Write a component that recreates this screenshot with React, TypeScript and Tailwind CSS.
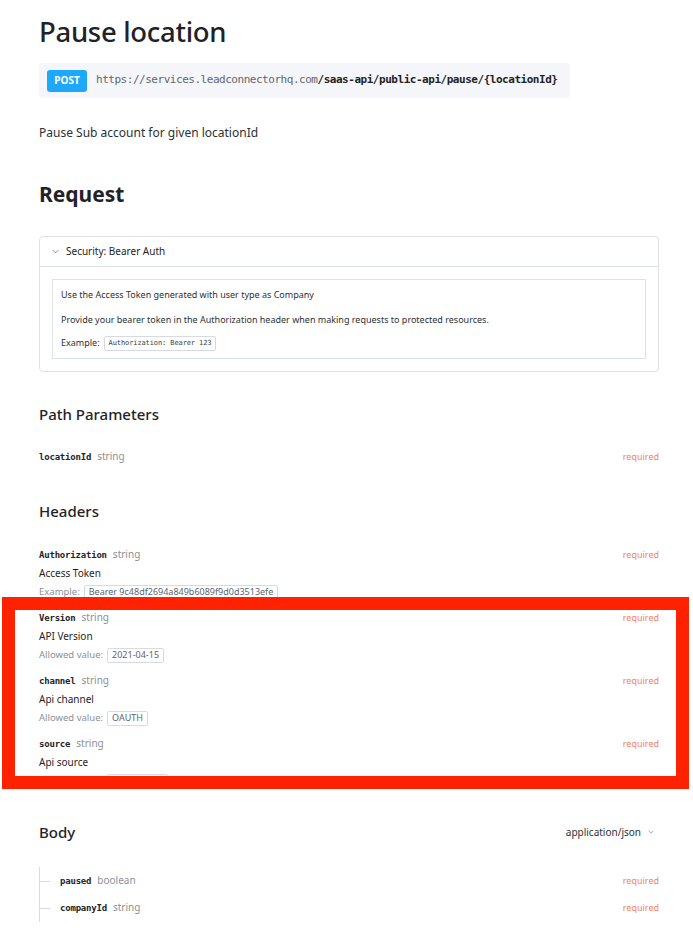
import React from 'react';

const sans = "font-['Noto_Sans',sans-serif]";
const mono = "font-['DejaVu_Sans_Mono',monospace]";

type Field = {
  name: string;
  type: string;
  desc?: string;
  label?: string;
  value?: string;
};

const HEADERS: Field[] = [
  { name: 'Authorization', type: 'string', desc: 'Access Token', label: 'Example:', value: 'Bearer 9c48df2694a849b6089f9d0d3513efe' },
  { name: 'Version', type: 'string', desc: 'API Version', label: 'Allowed value:', value: '2021-04-15' },
  { name: 'channel', type: 'string', desc: 'Api channel', label: 'Allowed value:', value: 'OAUTH' },
  { name: 'source', type: 'string', desc: 'Api source', label: 'Allowed value:', value: 'WEBSITE_UI' },
];

const FieldName: React.FC<{ name: string; type: string }> = ({ name, type }) => (
  <div className="flex items-baseline gap-[6px]">
    <span className={`${mono} text-[9px] font-bold tracking-[-0.2px] text-[#1f2328]`}>{name}</span>
    <span className="text-[10px] text-[#8b9099]">{type}</span>
  </div>
);

const Required = () => <span className="text-[9px] text-[#f2845f]">required</span>;

const HeaderRow: React.FC<{ f: Field }> = ({ f }) => (
  <div className="flex flex-col">
    <div className="flex items-center justify-between h-[16px]">
      <FieldName name={f.name} type={f.type} />
      <Required />
    </div>
    <div className="mt-[2px] text-[10px] text-[#1f2328] h-[16px] flex items-center">{f.desc}</div>
    <div className="mt-[3px] flex items-center gap-[4px] h-[16px]">
      <span className="text-[9.5px] text-[#8b9099]">{f.label}</span>
      <span className="border border-[#d6dbe3] rounded-[2px] px-[4px] h-[15px] flex items-center text-[9px] text-[#5c6470]">{f.value}</span>
    </div>
  </div>
);

export default function App() {
  return (
    <div className={`${sans} relative bg-white w-[693px] h-[932px] overflow-hidden text-[#1f2328]`}>
      <div className="ml-[39px] pt-[12px] w-[620px]">
        <h1 className="text-[27.5px] font-medium leading-[40px] tracking-[-0.3px]">Pause location</h1>

        <div className="mt-[11px] w-[531px] h-[35px] bg-[#f5f6f9] rounded-[4px] flex items-center pl-[8px] gap-[9px]">
          <span className="bg-[#1ea8fc] text-white text-[10px] font-bold rounded-[3px] w-[40px] h-[22px] flex items-center justify-center">POST</span>
          <span className={`${mono} text-[11px] tracking-[-0.47px]`}>
            <span className="text-[#5f6670]">https://services.leadconnectorhq.com</span>
            <span className="text-[#1f2328] font-bold">/saas-api/public-api/pause/{'{locationId}'}</span>
          </span>
        </div>

        <p className="mt-[26px] text-[12px] leading-[18px] text-[#2b3036]">Pause Sub account for given locationId</p>

        <h2 className="mt-[38px] text-[21px] font-bold leading-[28px]">Request</h2>

        <div className="mt-[28px] border border-[#dde1e8] rounded-[4px] w-[620px]">
          <div className="h-[30px] flex items-center px-[11px] gap-[6px] border-b border-[#dde1e8]">
            <svg width="9" height="9" viewBox="0 0 10 10" fill="none" stroke="#7a818b" strokeWidth="1">
              <path d="M2 3.5 L5 6.5 L8 3.5" />
            </svg>
            <span className="text-[10px]">Security: Bearer Auth</span>
          </div>
          <div className="p-[12px]">
            <div className="border border-[#dde1e8] px-[8px] pt-[8px] pb-[7px] flex flex-col gap-[8px] text-[9px] text-[#2b3036]">
              <div className="h-[14px] flex items-center">Use the Access Token generated with user type as Company</div>
              <div className="h-[14px] flex items-center mt-[3px]">Provide your bearer token in the Authorization header when making requests to protected resources.</div>
              <div className="flex items-center gap-[4px] h-[16px]">
                <span>Example:</span>
                <span className={`${mono} border border-[#d6dbe3] rounded-[2px] px-[4px] h-[15px] flex items-center text-[7px] tracking-[-0.1px] text-[#3b4048]`}>Authorization: Bearer 123</span>
              </div>
            </div>
          </div>
        </div>

        <h3 className="mt-[31px] text-[15px] font-medium leading-[22px]">Path Parameters</h3>
        <div className="mt-[24px] flex items-center justify-between h-[16px]">
          <FieldName name="locationId" type="string" />
          <Required />
        </div>

        <h3 className="mt-[35px] text-[15px] font-medium leading-[22px]">Headers</h3>
        <div className="mt-[25px] flex flex-col gap-[10px]">
          {HEADERS.map((f) => (
            <HeaderRow key={f.name} f={f} />
          ))}
        </div>

        <div className="mt-[32px] flex items-center justify-between">
          <h3 className="text-[15px] font-medium leading-[22px]">Body</h3>
          <div className="flex items-center gap-[6px] pr-[4px] text-[10px] text-[#2b3036]">
            application/json
            <svg width="8" height="8" viewBox="0 0 10 10" fill="none" stroke="#8b9099" strokeWidth="1">
              <path d="M2 3.5 L5 6.5 L8 3.5" />
            </svg>
          </div>
        </div>

        <div className="mt-[24px] border-l border-[#d6dbe3] flex flex-col gap-[11px] py-[6px]">
          {[
            { name: 'paused', type: 'boolean' },
            { name: 'companyId', type: 'string' },
          ].map((f) => (
            <div key={f.name} className="flex items-center justify-between h-[16px]">
              <div className="flex items-center gap-[10px]">
                <span className="w-[10px] h-px bg-[#d6dbe3]" />
                <FieldName name={f.name} type={f.type} />
              </div>
              <Required />
            </div>
          ))}
        </div>
      </div>

      <div className="absolute left-[2px] top-[597px] w-[687px] h-[192px] border-[13px] border-[#ff2200] pointer-events-none" />
    </div>
  );
}
